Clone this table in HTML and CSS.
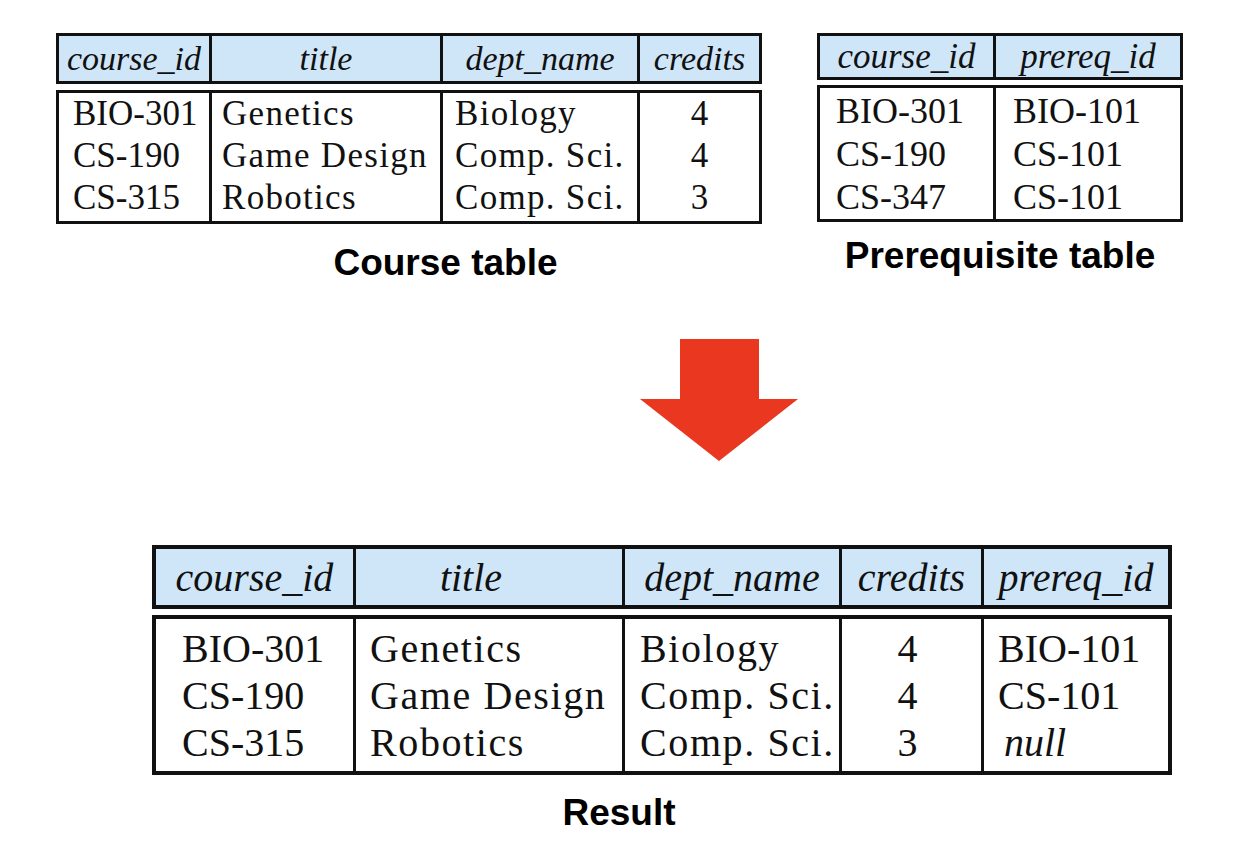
FILE: index.html
```html
<!DOCTYPE html>
<html>
<head>
<meta charset="utf-8">
<title>Left outer join</title>
<link rel="stylesheet" href="styles.css">
</head>
<body>
<div class="page">
  <div class="top">
    <div class="fig fig-course">
      <div class="tbl tbl-course">
        <div class="hdr">
          <div class="c">course_id</div>
          <div class="c">title</div>
          <div class="c">dept_name</div>
          <div class="c">credits</div>
        </div>
        <div class="bdy">
          <div class="c p1"><div>BIO-301</div><div>CS-190</div><div>CS-315</div></div>
          <div class="c p2 wide"><div>Genetics</div><div>Game Design</div><div>Robotics</div></div>
          <div class="c p3 wide"><div>Biology</div><div>Comp. Sci.</div><div>Comp. Sci.</div></div>
          <div class="c ctr"><div>4</div><div>4</div><div>3</div></div>
        </div>
      </div>
      <div class="label label-course">Course table</div>
    </div>
    <div class="fig fig-prereq">
      <div class="tbl tbl-prereq">
        <div class="hdr">
          <div class="c">course_id</div>
          <div class="c">prereq_id</div>
        </div>
        <div class="bdy">
          <div class="c p1"><div>BIO-301</div><div>CS-190</div><div>CS-347</div></div>
          <div class="c p2"><div>BIO-101</div><div>CS-101</div><div>CS-101</div></div>
        </div>
      </div>
      <div class="label label-prereq">Prerequisite table</div>
    </div>
  </div>

  <div class="arrow">
    <svg width="158" height="122" viewBox="0 0 158 122" aria-hidden="true">
      <polygon points="40,0 119,0 119,60 158,60 79,122 0,60 40,60" fill="#e9381f"/>
    </svg>
  </div>

  <div class="fig fig-result">
    <div class="tbl tbl-result">
      <div class="hdr">
        <div class="c">course_id</div>
        <div class="c h-title">title</div>
        <div class="c">dept_name</div>
        <div class="c">credits</div>
        <div class="c">prereq_id</div>
      </div>
      <div class="bdy">
        <div class="c p1"><div>BIO-301</div><div>CS-190</div><div>CS-315</div></div>
        <div class="c p2 wide"><div>Genetics</div><div>Game Design</div><div>Robotics</div></div>
        <div class="c p3 wide"><div>Biology</div><div>Comp. Sci.</div><div>Comp. Sci.</div></div>
        <div class="c ctr"><div>4</div><div>4</div><div>3</div></div>
        <div class="c p5"><div>BIO-101</div><div>CS-101</div><div class="null">null</div></div>
      </div>
    </div>
    <div class="label label-result">Result</div>
  </div>
</div>
</body>
</html>
```

FILE: styles.css
```css
html, body {
  margin: 0;
  padding: 0;
  background: #ffffff;
}

.page {
  width: 1256px;
  height: 846px;
  overflow: hidden;
  padding-top: 33px;
  box-sizing: border-box;
  font-family: "Liberation Serif", "Times New Roman", serif;
  color: #111;
}

.top {
  display: flex;
  align-items: flex-start;
}

.fig-course {
  margin-left: 56px;
  width: 706px;
}

.fig-prereq {
  margin-left: 55px;
  width: 366px;
}

.hdr,
.bdy {
  display: grid;
  box-sizing: border-box;
  border: 3px solid #111;
}

.hdr {
  background: #cfe6f9;
}

.bdy {
  background: #ffffff;
}

.hdr .c {
  display: flex;
  align-items: center;
  justify-content: center;
  font-style: italic;
  white-space: nowrap;
}

.hdr .c + .c,
.bdy .c + .c {
  border-left: 3px solid #111;
}

.bdy .c {
  white-space: nowrap;
}

.bdy .ctr {
  text-align: center;
}

/* Course table */
.tbl-course .hdr,
.tbl-course .bdy {
  grid-template-columns: 150px 231px 197px 122px;
}

.tbl-course .hdr {
  height: 51px;
  font-size: 34px;
}

.tbl-course .bdy {
  margin-top: 6px;
  height: 134px;
  font-size: 35px;
  line-height: 42px;
}

.tbl-course .wide { letter-spacing: 1.3px; }
.tbl-course .p1 { padding-left: 14px; }
.tbl-course .p2 { padding-left: 10px; }
.tbl-course .p3 { padding-left: 12px; }

/* Prerequisite table */
.tbl-prereq .hdr,
.tbl-prereq .bdy {
  grid-template-columns: 173px 187px;
}

.tbl-prereq .hdr {
  height: 47px;
  font-size: 35px;
}

.tbl-prereq .bdy {
  margin-top: 5px;
  height: 137px;
  font-size: 36px;
  line-height: 43px;
}

.tbl-prereq .bdy .c { padding-top: 2px; }
.tbl-prereq .p1 { padding-left: 16px; }
.tbl-prereq .p2 { padding-left: 17px; }

/* Labels */
.label {
  font-family: "Liberation Sans", Arial, sans-serif;
  font-weight: bold;
  font-size: 37px;
  line-height: 41px;
  color: #000;
  text-align: center;
  white-space: nowrap;
}

.label-course {
  margin-top: 18px;
  padding-left: 73px;
}

.label-prereq {
  margin-top: 13px;
}

/* Arrow */
.arrow {
  margin-left: 640px;
  margin-top: 56px;
  height: 122px;
}

.arrow svg {
  display: block;
}

/* Result */
.fig-result {
  margin-left: 152px;
  margin-top: 84px;
  width: 1020px;
}

.tbl-result .hdr,
.tbl-result .bdy {
  border-width: 4px;
  grid-template-columns: 197px 269px 217px 142px 187px;
}

.tbl-result .hdr {
  height: 64px;
  font-size: 40px;
}

.tbl-result .h-title {
  padding-right: 36px;
}

.tbl-result .bdy {
  margin-top: 6px;
  height: 160px;
  font-size: 40px;
  line-height: 47px;
}

.tbl-result .bdy .c { padding-top: 6px; }
.tbl-result .wide { letter-spacing: 1.6px; }
.tbl-result .ctr { padding-right: 8px; }
.tbl-result .p1 { padding-left: 26px; }
.tbl-result .p2 { padding-left: 14px; }
.tbl-result .p3 { padding-left: 15px; }
.tbl-result .p5 { padding-left: 14px; }

.tbl-result .null {
  font-style: italic;
  padding-left: 6px;
}

.label-result {
  margin-top: 17px;
  padding-right: 86px;
}
```
